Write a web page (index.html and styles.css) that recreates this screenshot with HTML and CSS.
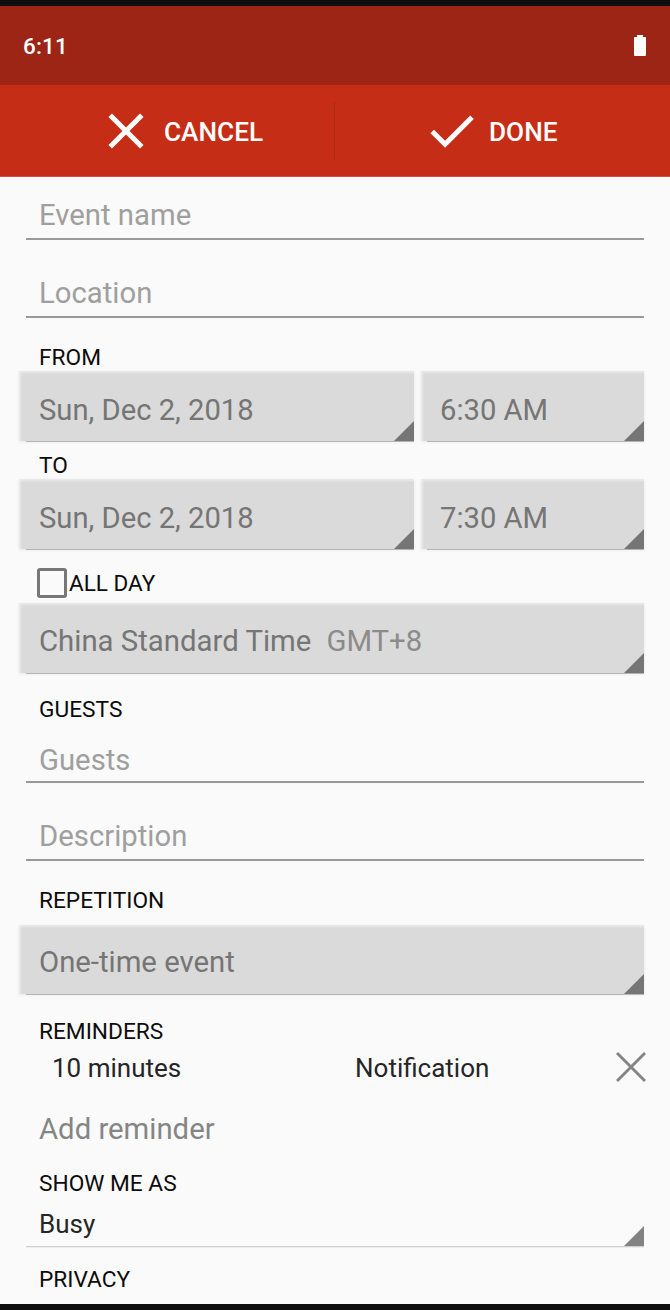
FILE: index.html
```html
<!DOCTYPE html>
<html lang="en">
<head>
<meta charset="utf-8">
<title>Edit event</title>
<link rel="stylesheet" href="styles.css">
</head>
<body>
<div class="screen">
  <header class="status">
    <span class="clock">6:11</span>
    <svg class="battery" width="14" height="22" viewBox="0 0 14 22"><path d="M4 0h6v2h2q1 0 1 1v17q0 1-1 1H2q-1 0-1-1V3q0-1 1-1h2z" fill="#fff"/></svg>
  </header>
  <nav class="actions">
    <div class="action cancel">
      <svg class="icon-x" width="36" height="36" viewBox="0 0 36 36"><path d="M2.2 2.2 33.8 33.8M33.8 2.2 2.2 33.8" stroke="#fff" stroke-width="5" fill="none"/></svg>
      <span>CANCEL</span>
    </div>
    <div class="action done">
      <svg class="icon-check" width="44" height="36" viewBox="0 0 44 36"><path d="M2.2 18.4 15.1 31.2 42 4.2" stroke="#fff" stroke-width="5" fill="none"/></svg>
      <span>DONE</span>
    </div>
  </nav>
  <main class="form">
    <div class="input input-name"><span>Event name</span></div>
    <div class="input input-location"><span>Location</span></div>
    <div class="label label-from">FROM</div>
    <div class="pair">
      <div class="picker"><span>Sun, Dec 2, 2018</span></div>
      <div class="picker"><span>6:30 AM</span></div>
    </div>
    <div class="label label-to">TO</div>
    <div class="pair">
      <div class="picker"><span>Sun, Dec 2, 2018</span></div>
      <div class="picker"><span>7:30 AM</span></div>
    </div>
    <div class="allday"><i class="checkbox"></i><span>ALL DAY</span></div>
    <div class="picker picker-zone"><span>China Standard Time</span><span class="offset">GMT+8</span></div>
    <div class="label label-guests">GUESTS</div>
    <div class="input input-guests"><span>Guests</span></div>
    <div class="input input-description"><span>Description</span></div>
    <div class="label label-repetition">REPETITION</div>
    <div class="picker picker-repeat"><span>One-time event</span></div>
    <div class="label label-reminders">REMINDERS</div>
    <div class="reminder">
      <span>10 minutes</span>
      <span>Notification</span>
      <svg class="remove" width="30" height="30" viewBox="0 0 30 30"><path d="M1 1 29 29M29 1 1 29" stroke="#858585" stroke-width="2.9" fill="none"/></svg>
    </div>
    <div class="add">Add reminder</div>
    <div class="label label-show">SHOW ME AS</div>
    <div class="spinner">Busy</div>
    <div class="label label-privacy">PRIVACY</div>
  </main>
</div>
</body>
</html>
```
FILE: styles.css
```css
* { box-sizing: border-box; }
body { margin: 0; background: #fafafa; font-family: Roboto, sans-serif; }
.screen {
  width: 670px; height: 1310px; overflow: hidden;
  display: flex; flex-direction: column;
  border-top: 6px solid #0e0e0e; border-bottom: 6px solid #0e0e0e;
  background: #fafafa;
}
.status {
  flex: none; height: 79px; padding: 1px 23px 0;
  display: flex; align-items: center; justify-content: space-between;
  background: #9c2515; color: #fff;
}
.clock { font-size: 22.5px; font-weight: 500; letter-spacing: 0.2px; }
.actions {
  flex: none; height: 92px; display: flex;
  background: #c62d16; color: #fff; border-bottom: 1px solid #cf5440;
  font-size: 26.2px; font-weight: 500;
}
.action { width: 335px; display: flex; align-items: center; }
.action span { line-height: 30px; padding-top: 2px; }
.cancel {
  padding-left: 108px; gap: 20px;
  background: linear-gradient(#ac2814, #ac2814) right 17px / 1px 58px no-repeat;
}
.done { padding-left: 95px; gap: 15px; }
.form { flex: none; }
.input {
  margin: 0 26px; padding: 0 13px;
  font-size: 29.3px; line-height: 30px; color: #9f9f9f;
  border-bottom: 2px solid #999;
}
.input-name { height: 63px; padding-top: 23px; }
.input-location { height: 78px; padding-top: 38px; }
.input-guests { height: 40px; padding-top: 2px; }
.input-description { height: 78px; padding-top: 38px; }
.label { margin-left: 39px; height: 24px; font-size: 22.7px; line-height: 26px; color: #0c0c0c; white-space: nowrap; }
.label-from { margin-top: 27px; margin-bottom: 2px; }
.label-to { margin: 12px 0 2px 39px; }
.pair { display: grid; grid-template-columns: 395px 223px; gap: 7px; margin-left: 19px; }
.picker {
  position: relative; height: 70px; padding: 24px 20px 0;
  display: flex; align-items: flex-start;
  background: #dadada; color: #757575;
  font-size: 29.2px; line-height: 30px; white-space: nowrap;
  box-shadow: 0 1px 3px rgba(0, 0, 0, 0.08), inset 2px 2px 2px rgba(250, 250, 250, 0.5);
}
.pair .picker:last-child { padding-left: 19px; }
.picker::before { content: ""; position: absolute; left: 7px; right: 0; bottom: -1px; height: 1px; background: #b4b4b4; }
.pair .picker:last-child::before { left: 6px; }
.picker::after, .spinner::after {
  content: ""; position: absolute; right: 0; bottom: 0; width: 20px; height: 20px;
  background: #757575; clip-path: polygon(100% 0, 100% 100%, 0 100%);
}
.allday { height: 30px; margin: 19px 0 5px 37px; display: flex; align-items: center; gap: 2px; font-size: 22.5px; line-height: 24px; color: #0c0c0c; }
.checkbox { width: 30px; height: 30px; border: 3px solid #777; border-radius: 3px; }
.picker-zone, .picker-repeat { width: 625px; margin-left: 19px; }
.picker-zone { padding-top: 23px; gap: 15px; font-size: 29.35px; }
.offset { color: #8b8b8b; }
.label-guests { margin: 24px 0 22px 39px; }
.label-repetition { margin: 27px 0 13px 39px; }
.picker-repeat { height: 69px; padding-top: 22px; font-size: 29.3px; }
.label-reminders { margin-top: 25px; }
.reminder { height: 30px; margin: 10px 24px 0 52px; display: grid; grid-template-columns: 303px 1fr 30px; align-items: center; font-size: 26px; line-height: 30px; color: #252525; }
.remove { margin-top: -2px; }
.add { margin: 31px 0 0 39px; font-size: 29.3px; line-height: 30px; color: #858585; }
.label-show { margin-top: 27px; }
.spinner { position: relative; height: 51px; margin: 1px 26px 0; padding: 13px 13px 0; font-size: 26px; line-height: 30px; color: #252525; border-bottom: 1px solid #cecece; box-shadow: 0 1px #ededed; }
.spinner::after { background: #828282; }
.label-privacy { margin-top: 20px; }
```
